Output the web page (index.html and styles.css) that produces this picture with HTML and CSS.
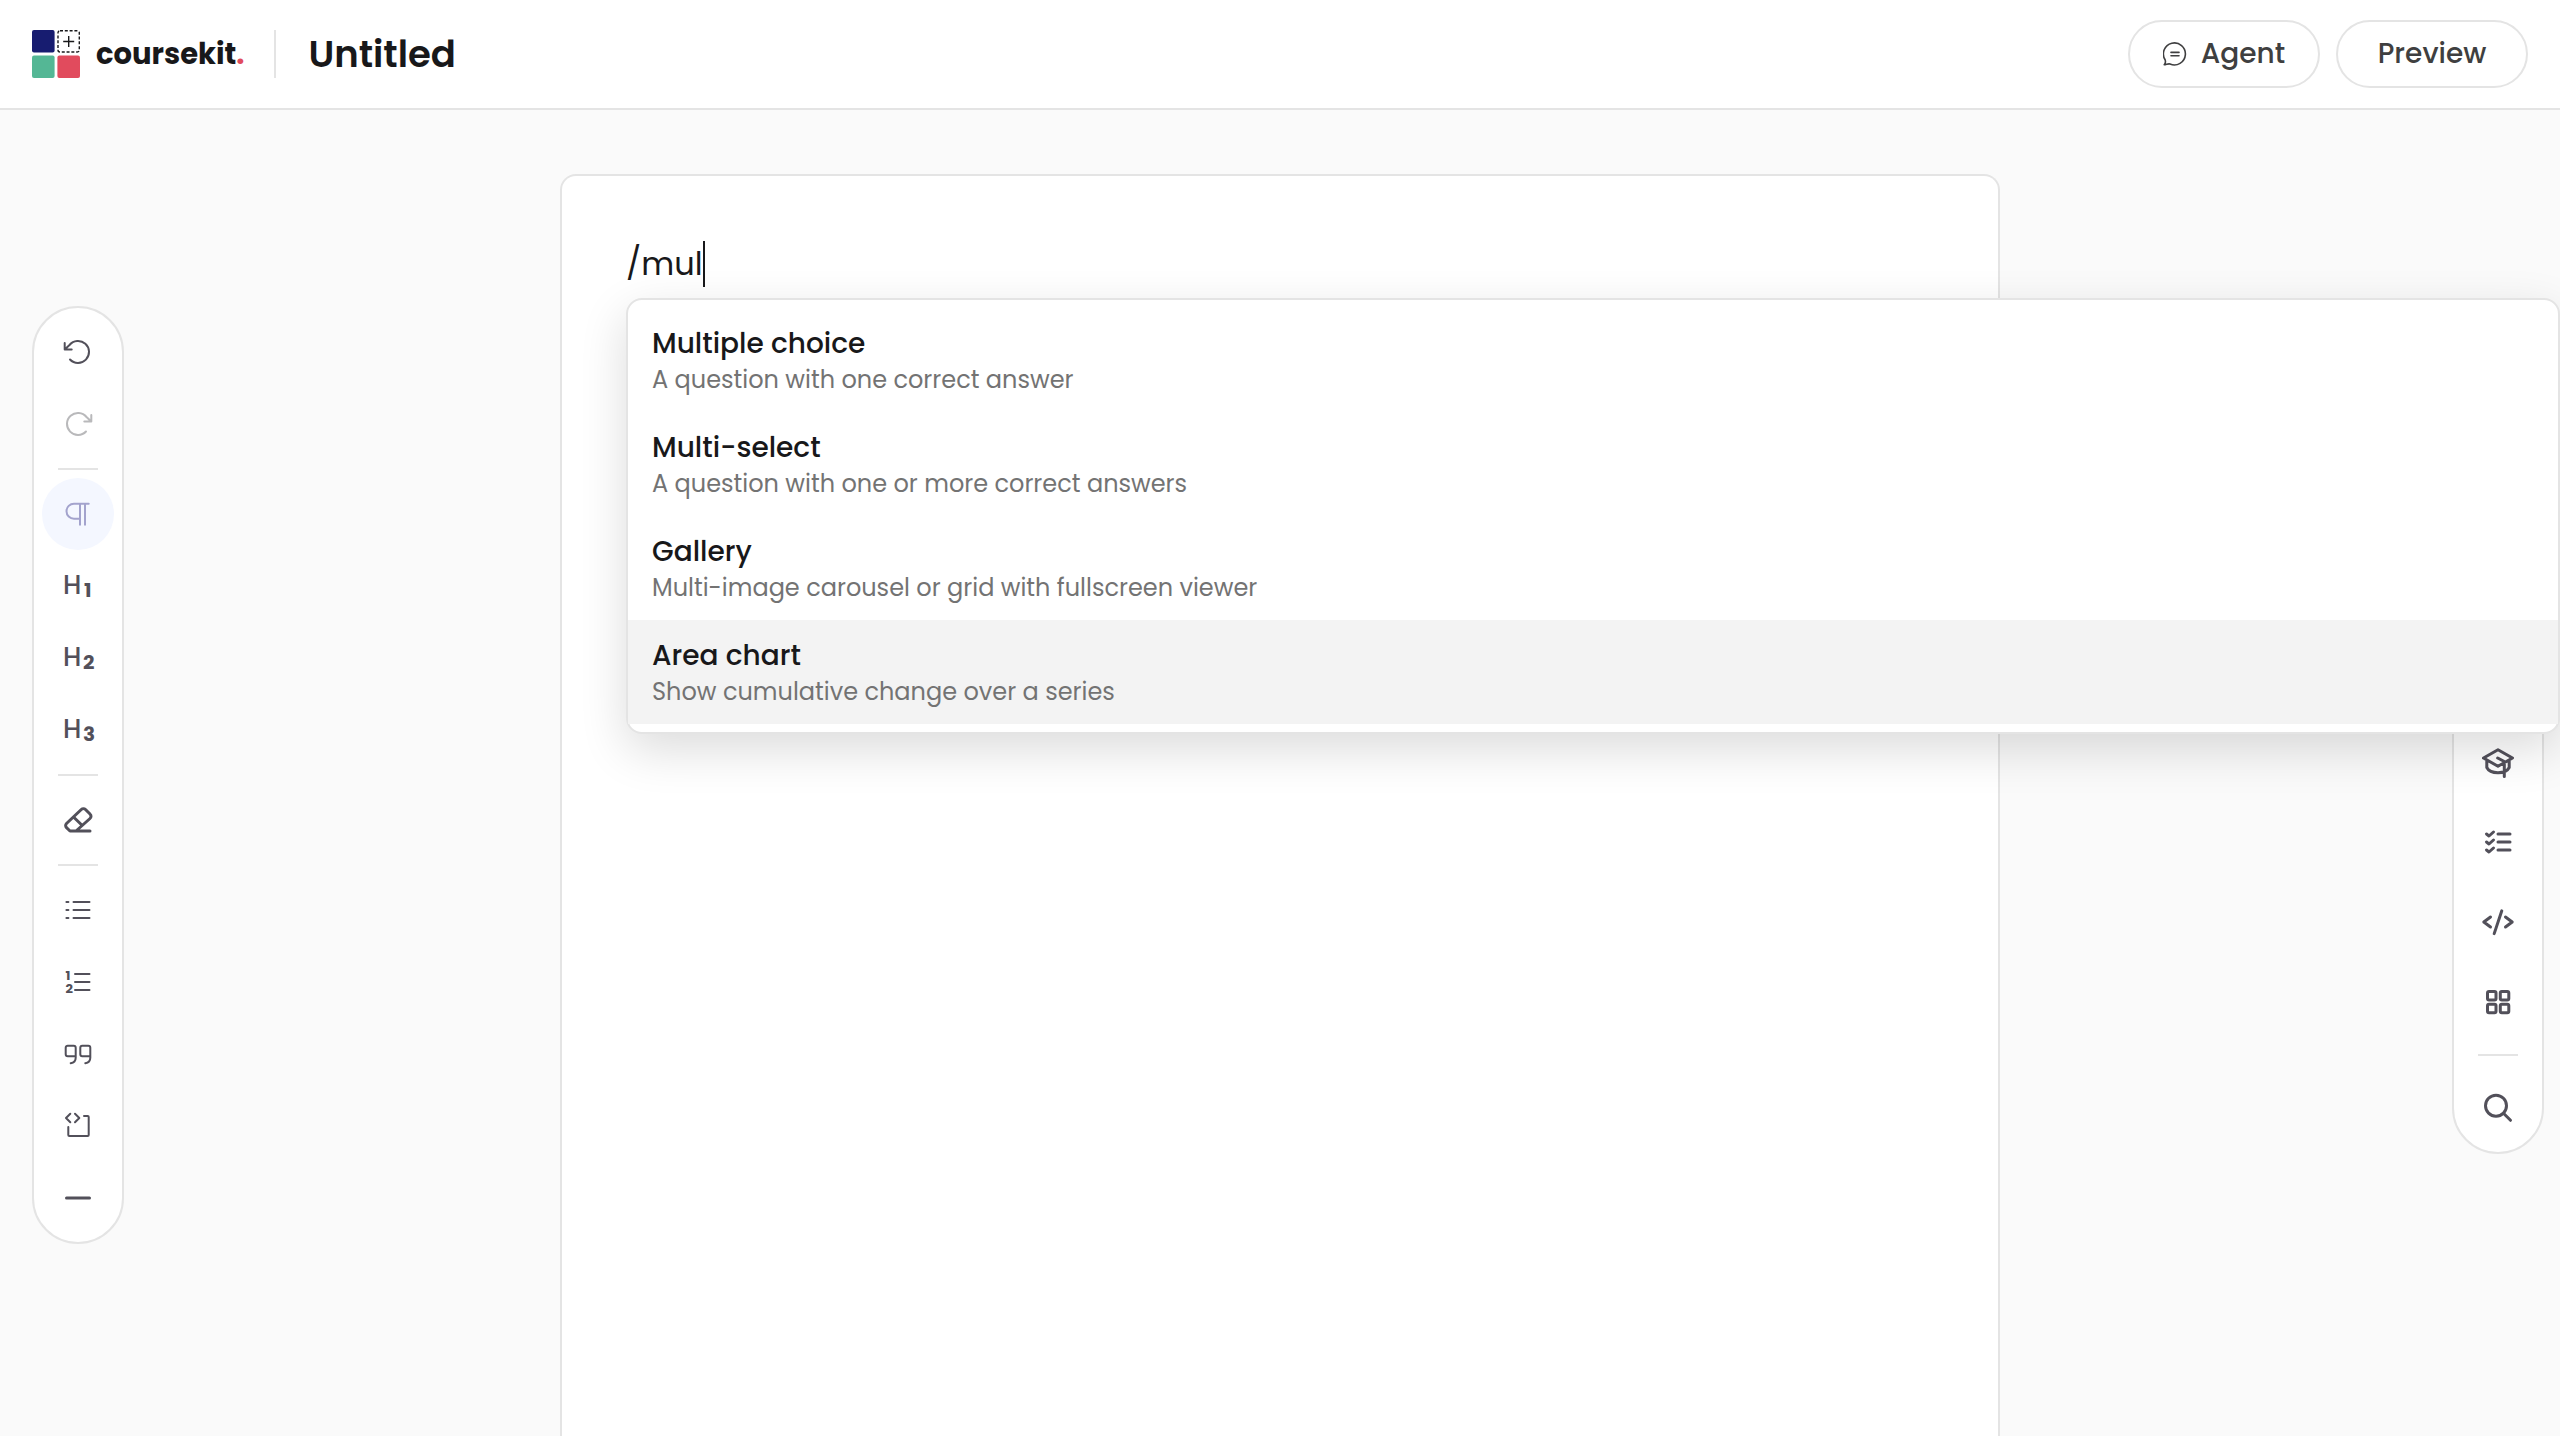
FILE: index.html
```
<!DOCTYPE html>
<html lang="en">
<head>
    <meta charset="UTF-8">
    <meta name="viewport" content="width=device-width, initial-scale=1.0">
    <title>Untitled - coursekit</title>
    <link rel="stylesheet" href="styles.css">
</head>
<body>
    <header class="header">
        <a class="brand" href="#">
            <svg class="logo" viewBox="0 0 48 48" aria-hidden="true">
                <rect width="22.6" height="22.6" rx="2" fill="#171c70"/>
                <rect x="26" y="0.7" width="21.3" height="21.3" rx="2" fill="none" stroke="#18181a" stroke-width="1.4" stroke-dasharray="3 1.8"/>
                <path d="M36.7 6v11M31.2 11.5h11" stroke="#18181a" stroke-width="1.4"/>
                <rect y="25.4" width="22.6" height="22.6" rx="2" fill="#54b795"/>
                <rect x="25.4" y="25.4" width="22.6" height="22.6" rx="2" fill="#e14b5d"/>
            </svg>
            <span class="brand-name">coursekit<span class="brand-dot">.</span></span>
        </a>
        <h1 class="doc-title">Untitled</h1>
        <div class="actions">
            <button class="pill" type="button">
                <svg class="pill-icon" viewBox="0 0 24 24" aria-hidden="true">
                    <path d="M1.2 22.8c1.3-1.4 1.6-3 .9-5A11 11 0 1 1 7 22c-2-.6-3.8.8-5.8.8zM8 10.4h8M8 13.8h8"/>
                </svg>
                Agent
            </button>
            <button class="pill" type="button">Preview</button>
        </div>
    </header>

    <main class="workspace">
        <div class="toolbar" role="toolbar" aria-label="Formatting">
            <button class="tool thin" type="button" aria-label="Undo">
                <svg viewBox="0 0 32 32"><path d="M8 23.5A11 11 0 1 0 7.5 9L3 13.3M2.7 7v6.5h7"/></svg>
            </button>
            <button class="tool thin" type="button" aria-label="Redo" disabled>
                <svg viewBox="0 0 32 32"><path d="M24 23.5A11 11 0 1 1 24.5 9l4.5 4.3M29.3 7v6.5h-7"/></svg>
            </button>
            <hr class="divider">
            <button class="tool thin active" type="button" aria-label="Paragraph">
                <svg viewBox="0 0 32 32"><path d="M26.7 5.7H12a7.5 7.5 0 0 0 0 15h6M18 5.7v21M23 5.7v21"/></svg>
            </button>
            <button class="tool" type="button" aria-label="Heading 1">
                <svg viewBox="0 0 32 32"><text class="letter" x="1" y="24">H</text><text class="level" x="22" y="27">1</text></svg>
            </button>
            <button class="tool" type="button" aria-label="Heading 2">
                <svg viewBox="0 0 32 32"><text class="letter" x="1" y="24">H</text><text class="level" x="21" y="27">2</text></svg>
            </button>
            <button class="tool" type="button" aria-label="Heading 3">
                <svg viewBox="0 0 32 32"><text class="letter" x="1" y="24">H</text><text class="level" x="21" y="27">3</text></svg>
            </button>
            <hr class="divider">
            <button class="tool" type="button" aria-label="Clear formatting">
                <svg viewBox="0 0 32 32"><path d="M14 27L28 14.5a3 3 0 0 0 0-4.5l-4.500-4.500a3 3 0 0 0-4.2 0L4.5 19.5a3 3 0 0 0 0 4.2L8 27h20M11.5 13L20 21.3"/></svg>
            </button>
            <hr class="divider">
            <button class="tool thin" type="button" aria-label="Bullet list">
                <svg viewBox="0 0 32 32"><path d="M11.5 8h16M11.5 16h16M11.5 24h16"/><path d="M4.4 8h2M4.4 16h2M4.4 24h2"/></svg>
            </button>
            <button class="tool thin" type="button" aria-label="Numbered list">
                <svg viewBox="0 0 32 32"><path d="M13 8h14.5M13 16h14.5M13 24h14.5"/><text class="num" x="3.5" y="13.5">1</text><text class="num" x="3.5" y="26.5">2</text></svg>
            </button>
            <button class="tool thin" type="button" aria-label="Quote">
                <svg viewBox="0 0 32 32"><path d="M13.7 18.3H5.7a2 2 0 0 1-2-2V9.7a2 2 0 0 1 2-2h6a2 2 0 0 1 2 2v10c0 3-2 5-5 5.500M28.3 18.3h-8a2 2 0 0 1-2-2V9.7a2 2 0 0 1 2-2h6a2 2 0 0 1 2 2v10c0 3-2 5-5 5.5"/></svg>
            </button>
            <button class="tool thin" type="button" aria-label="Code block">
                <svg viewBox="0 0 32 32"><path d="M8.3 3.7L4 8l4.3 4.3M13 3.7L17.3 8 13 12.3M22 6h3.7a1 1 0 0 1 1 1v18a1 1 0 0 1-1 1H7.3a1 1 0 0 1-1-1v-8"/></svg>
            </button>
            <button class="tool" type="button" aria-label="Horizontal rule">
                <svg viewBox="0 0 32 32"><path d="M4.5 16h23"/></svg>
            </button>
        </div>

        <article class="page">
            <div class="editor">
                <label class="line">
                    <input class="line-input" type="text" size="4" value="/mul" aria-label="Block text">
                    <span class="caret"></span>
                </label>
                <div class="menu" role="listbox" aria-label="Blocks">
                    <button class="option" type="button" role="option">
                        <span class="option-title">Multiple choice</span>
                        <span class="option-text">A question with one correct answer</span>
                    </button>
                    <button class="option" type="button" role="option">
                        <span class="option-title">Multi-select</span>
                        <span class="option-text">A question with one or more correct answers</span>
                    </button>
                    <button class="option" type="button" role="option">
                        <span class="option-title">Gallery</span>
                        <span class="option-text">Multi-image carousel or grid with fullscreen viewer</span>
                    </button>
                    <button class="option selected" type="button" role="option" aria-selected="true">
                        <span class="option-title">Area chart</span>
                        <span class="option-text">Show cumulative change over a series</span>
                    </button>
                </div>
            </div>
        </article>

        <div class="toolbar blocks" role="toolbar" aria-label="Blocks">
            <button class="tool" type="button" aria-label="Text">
                <svg viewBox="0 0 32 32"><path d="M6 8h20M16 8v18"/></svg>
            </button>
            <button class="tool" type="button" aria-label="Image">
                <svg viewBox="0 0 32 32"><rect x="4" y="5" width="24" height="22" rx="3"/><path d="M4 22l8-7 14 12"/></svg>
            </button>
            <button class="tool" type="button" aria-label="Video">
                <svg viewBox="0 0 32 32"><path d="M9 5l17 11L9 27z"/></svg>
            </button>
            <button class="tool" type="button" aria-label="Chart">
                <svg viewBox="0 0 32 32"><path d="M6 27V15M16 27V5M26 27V11"/></svg>
            </button>
            <button class="tool" type="button" aria-label="Assessment">
                <svg viewBox="0 0 32 32"><path d="M16 3.7L30.5 12 16 20.3 1.5 12zM4.8 15v6.5c1.5 3 6 5.2 11.2 5.2s9.7-2.2 11.2-5.2V15M15.7 12l6.6 3.5v15"/></svg>
            </button>
            <button class="tool" type="button" aria-label="Checklist">
                <svg viewBox="0 0 32 32"><path d="M16 8h12M16 16h12M16 24h12M4.5 8l2.5 2 4.5-4M4.5 16l2.5 2 4.5-4M4.5 24l2.5 2 4.5-4"/></svg>
            </button>
            <button class="tool" type="button" aria-label="Code">
                <svg viewBox="0 0 32 32"><path d="M8.5 11L1.8 16l6.700 5M23.500 11l6.700 5-6.700 5M19.8 4.8l-7.600 22.800"/></svg>
            </button>
            <button class="tool" type="button" aria-label="Layout">
                <svg viewBox="0 0 32 32"><rect x="5.5" y="5.5" width="8.5" height="8.5" rx="1.5"/><rect x="18.3" y="5.5" width="8.5" height="8.5" rx="1.5"/><rect x="5.5" y="18.3" width="8.5" height="8.5" rx="1.5"/><rect x="18.3" y="18.3" width="8.5" height="8.5" rx="1.5"/></svg>
            </button>
            <hr class="divider">
            <button class="tool" type="button" aria-label="Search">
                <svg viewBox="0 0 32 32"><circle cx="14" cy="13.7" r="10.5"/><path d="M21.7 21.5l6.8 6.8"/></svg>
            </button>
        </div>
    </main>
</body>
</html>
```
FILE: styles.css
```
* {
    box-sizing: border-box;
}
body {
    font-family: Poppins, Inter, "Open Sans", sans-serif;
    min-height: 100vh;
    display: flex;
    flex-direction: column;
    background-color: #fafafa;
    color: #18181a;
    margin: 0;
    overflow-x: hidden;
}
button,
input {
    font: inherit;
    color: inherit;
}
button {
    cursor: pointer;
}
svg {
    fill: none;
    stroke: currentColor;
    stroke-linecap: round;
    stroke-linejoin: round;
}

/* Header */
.header {
    display: flex;
    align-items: center;
    padding: 20px 32px;
    background-color: white;
    border-bottom: 2px solid #e4e4e4;
}
.brand {
    display: flex;
    align-items: center;
    gap: 16px;
    height: 48px;
    padding-right: 30px;
    border-right: 2px solid #e4e4e4;
    color: inherit;
    text-decoration: none;
}
.logo {
    width: 48px;
    height: 48px;
    stroke: none;
    stroke-linecap: butt;
}
.brand-name {
    font-size: 29px;
    font-weight: 700;
}
.brand-dot {
    color: #e14b5d;
}
.doc-title {
    margin: 0 0 0 32px;
    font-size: 37px;
    font-weight: 600;
    line-height: 48px;
}
.actions {
    display: flex;
    gap: 16px;
    margin-left: auto;
}
.pill {
    display: flex;
    align-items: center;
    justify-content: center;
    gap: 14px;
    min-width: 192px;
    height: 68px;
    padding: 0 32px;
    border: 2px solid #e4e4e4;
    border-radius: 34px;
    background-color: white;
    color: #3f3f40;
    font-size: 28px;
    font-weight: 500;
}
.pill-icon {
    width: 24px;
    height: 24px;
    stroke-width: 1.6;
}

/* Workspace */
.workspace {
    flex: 1;
    display: grid;
    grid-template-columns: 1fr minmax(0, 1440px) 1fr;
    align-items: center;
    padding-top: 4px;
}
.toolbar {
    display: flex;
    flex-direction: column;
    align-items: center;
    justify-self: start;
    margin-left: 32px;
    padding: 8px;
    border: 2px solid #e4e4e4;
    border-radius: 46px;
    background-color: white;
}
.blocks {
    justify-self: end;
    gap: 8px;
    margin: 0 16px 0 0;
}
.tool {
    display: flex;
    align-items: center;
    justify-content: center;
    width: 72px;
    height: 72px;
    padding: 0;
    border: none;
    border-radius: 50%;
    background-color: transparent;
    color: #52505a;
}
.tool svg {
    width: 32px;
    height: 32px;
    stroke-width: 3;
    overflow: visible;
}
.tool.thin svg {
    stroke-width: 2;
}
.tool:disabled {
    color: #b9b9bb;
}
.active {
    background-color: #f4f7ff;
    color: #a3a3cd;
}
.letter,
.level,
.num {
    fill: currentColor;
    stroke: none;
}
.letter {
    font-size: 26px;
    font-weight: 500;
}
.level {
    font-size: 20px;
    font-weight: 700;
}
.num {
    font-size: 13px;
    font-weight: 700;
}
.divider {
    width: 40px;
    height: 2px;
    margin: 8px 0;
    border: none;
    background-color: #e4e4e4;
}

/* Page */
.page {
    align-self: stretch;
    margin-top: 60px;
    padding: 64px;
    border: 2px solid #e4e4e4;
    border-bottom: none;
    border-radius: 16px 16px 0 0;
    background-color: white;
}
.editor {
    position: relative;
}
.line {
    display: flex;
    align-items: center;
    height: 48px;
}
.line-input {
    field-sizing: content;
    padding: 0;
    border: none;
    outline: none;
    background: none;
    font-size: 32px;
    caret-color: transparent;
}
.caret {
    width: 2px;
    height: 46px;
    background-color: #18181a;
}

/* Slash menu, runs to the right edge of the window */
.menu {
    position: absolute;
    top: 58px;
    left: 0;
    z-index: 10;
    width: calc(50vw + 654px);
    padding: 8px 0;
    border: 2px solid #e4e4e4;
    border-radius: 16px;
    background-color: white;
    box-shadow: 0 16px 48px rgba(0, 0, 0, 0.14);
}
.option {
    display: flex;
    flex-direction: column;
    width: 100%;
    padding: 17px 24px 15px;
    border: none;
    background-color: transparent;
    text-align: left;
}
.option-title {
    font-size: 28px;
    font-weight: 500;
    line-height: 38px;
}
.option-text {
    font-size: 24px;
    line-height: 34px;
    color: #737373;
}
.selected {
    background-color: #f3f3f3;
}
```
